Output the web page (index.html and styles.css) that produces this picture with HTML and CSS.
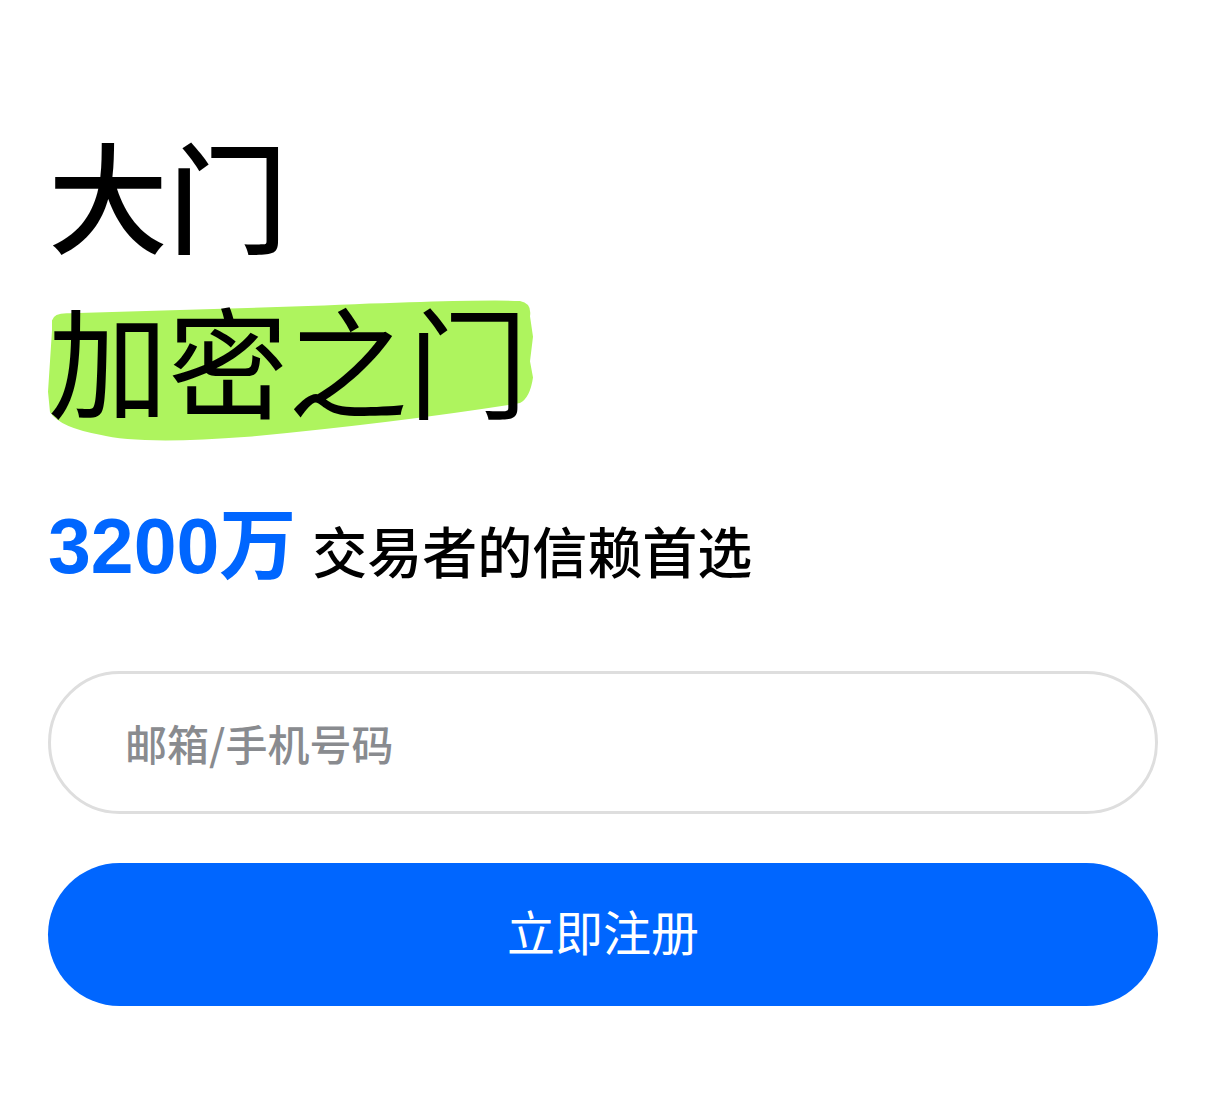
FILE: index.html
```html
<!DOCTYPE html>
<html lang="zh-CN">
<head>
<meta charset="utf-8">
<title>加密之门</title>
<link rel="stylesheet" href="styles.css">
</head>
<body>
<main class="page">
  <h1 class="title">
    <span class="line line-bold">大门</span>
    <span class="line line-hl">
      <svg class="hl" viewBox="0 0 490 145" preserveAspectRatio="none" aria-hidden="true">
        <path d="M4,20 Q6,12 22,13 L260,6 Q430,-1 472,1 Q484,3 482,16 L485,36 L482,60 L485,76 Q482,96 472,101 Q350,120 200,134 Q92,142 52,132 Q12,125 2,110 L0,90 L2,60 L4,30 Z" fill="#aef45e"/>
      </svg>
      <span class="hl-text">加密之门</span>
    </span>
  </h1>
  <p class="sub"><span class="num">3200万</span><span class="sub-text">交易者的信赖首选</span></p>
  <form class="form">
    <input class="field" type="text" placeholder="邮箱/手机号码">
    <button class="btn" type="button">立即注册</button>
  </form>
</main>
</body>
</html>
```
FILE: styles.css
```css
html, body {
  margin: 0;
  padding: 0;
  background: #ffffff;
}
body {
  font-family: "Noto Sans CJK SC", "Noto Sans", sans-serif;
  color: #000;
}
.page {
  padding: 111px 48px 0 48px;
}
.title {
  margin: 0;
  font-size: 120px;
  line-height: 165px;
  font-weight: 500;
  display: flex;
  flex-direction: column;
  align-items: flex-start;
}
.line {
  display: block;
}
.line-bold {
  font-weight: 500;
}
.line-hl {
  position: relative;
  font-weight: 400;
}
.hl {
  position: absolute;
  left: 0;
  top: 24px;
  width: 490px;
  height: 148px;
  z-index: 0;
}
.hl-text {
  position: relative;
  z-index: 1;
}
.sub {
  margin: 65px 0 0 0;
  display: flex;
  align-items: baseline;
  gap: 16px;
  line-height: 80px;
}
.num {
  font-family: "Liberation Sans", "Noto Sans CJK SC", sans-serif;
  font-size: 77px;
  font-weight: 700;
  color: #0066ff;
}
.sub-text {
  font-size: 55px;
  font-weight: 500;
}
.form {
  margin-top: 82px;
  display: flex;
  flex-direction: column;
  gap: 49px;
}
.field {
  box-sizing: border-box;
  height: 143px;
  width: 100%;
  border: 3px solid #dedede;
  border-radius: 72px;
  padding: 0 0 0 74px;
  font-family: "Noto Sans CJK SC", sans-serif;
  font-size: 42px;
  font-weight: 500;
  color: #222;
  background: #fff;
  outline: none;
}
.field::placeholder {
  color: #898b8f;
}
.btn {
  height: 143px;
  width: 100%;
  border: none;
  border-radius: 72px;
  padding: 0 0 10px 0;
  background: #0066ff;
  color: #fff;
  font-family: "Noto Sans CJK SC", sans-serif;
  font-size: 48px;
  font-weight: 400;
  cursor: pointer;
}
```
